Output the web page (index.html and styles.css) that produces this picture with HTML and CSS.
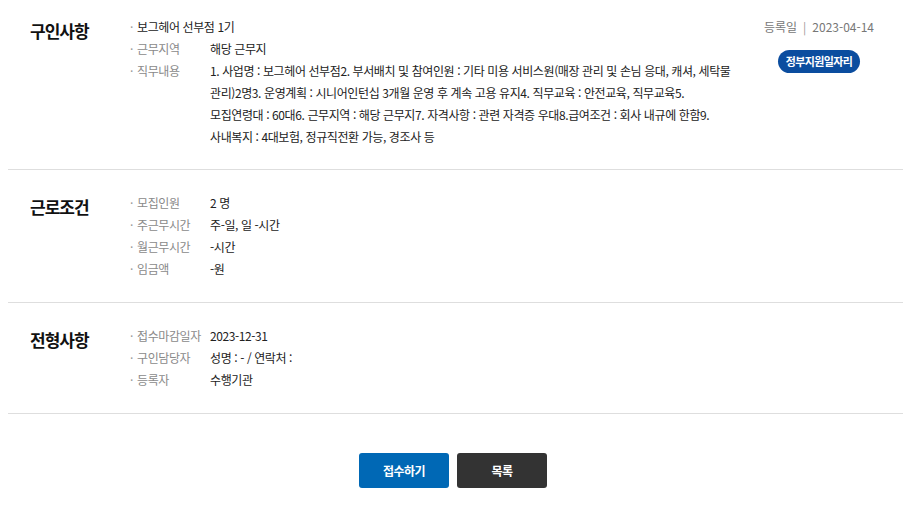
FILE: index.html
```html
<!DOCTYPE html>
<html lang="ko">
<head>
<meta charset="utf-8">
<link rel="stylesheet" href="styles.css">
</head>
<body>
<div class="page">
  <section class="sec sec-first">
    <h2 class="sec-title">구인사항</h2>
    <div class="sec-body">
      <ul class="rows">
        <li class="row"><span class="lead">보그헤어 선부점 1기</span></li>
        <li class="row"><span class="label">근무지역</span><span class="value">해당 근무지</span></li>
        <li class="row"><span class="label">직무내용</span><span class="value">1. 사업명 : 보그헤어 선부점2. 부서배치 및 참여인원 : 기타 미용 서비스원(매장 관리 및 손님 응대, 캐셔, 세탁물<br>관리)2명3. 운영계획 : 시니어인턴십 3개월 운영 후 계속 고용 유지4. 직무교육 : 안전교육, 직무교육5.<br>모집연령대 : 60대6. 근무지역 : 해당 근무지7. 자격사항 : 관련 자격증 우대8.급여조건 : 회사 내규에 한함9.<br>사내복지 : 4대보험, 정규직전환 가능, 경조사 등</span></li>
      </ul>
    </div>
    <div class="meta">
      <p class="reg"><span>등록일</span><span class="bar">|</span><span>2023-04-14</span></p>
      <span class="badge">정부지원일자리</span>
    </div>
  </section>
  <section class="sec">
    <h2 class="sec-title">근로조건</h2>
    <div class="sec-body">
      <ul class="rows">
        <li class="row"><span class="label">모집인원</span><span class="value">2 명</span></li>
        <li class="row"><span class="label">주근무시간</span><span class="value">주-일, 일 -시간</span></li>
        <li class="row"><span class="label">월근무시간</span><span class="value">-시간</span></li>
        <li class="row"><span class="label">임금액</span><span class="value">-원</span></li>
      </ul>
    </div>
  </section>
  <section class="sec">
    <h2 class="sec-title">전형사항</h2>
    <div class="sec-body">
      <ul class="rows">
        <li class="row"><span class="label">접수마감일자</span><span class="value">2023-12-31</span></li>
        <li class="row"><span class="label">구인담당자</span><span class="value">성명 : - / 연락처 :</span></li>
        <li class="row"><span class="label">등록자</span><span class="value">수행기관</span></li>
      </ul>
    </div>
  </section>
  <div class="actions">
    <a class="btn btn-primary">접수하기</a>
    <a class="btn btn-dark">목록</a>
  </div>
</div>
</body>
</html>
```

FILE: styles.css
```css
* { box-sizing: border-box; }
html, body { margin: 0; padding: 0; background: #fff; }
body {
  font-family: "Noto Sans CJK KR", "Noto Sans", sans-serif;
  color: #222;
  width: 903px;
  overflow: hidden;
}
.page { padding-left: 8px; }
.sec {
  display: flex;
  align-items: flex-start;
  border-bottom: 1px solid #dedede;
  padding: 22px 0 22px 22px;
}
.sec-first { padding-top: 16px; padding-bottom: 21px; }
.sec-title {
  margin: 0;
  width: 100px;
  flex: none;
  font-size: 17px;
  line-height: 30px;
  font-weight: 700;
  letter-spacing: -1px;
  color: #111;
}
.sec-body { flex: 1; }
.rows { list-style: none; margin: 0; padding: 0; }
.row {
  display: flex;
  font-size: 12px;
  line-height: 22px;
  letter-spacing: -0.4px;
}
.row::before {
  content: "·";
  color: #999;
  width: 7px;
  flex: none;
}
.label { width: 73px; flex: none; color: #8a8a8a; }
.value { color: #222; white-space: nowrap; }
.lead { color: #222; }
.meta {
  flex: none;
  display: flex;
  flex-direction: column;
  align-items: center;
  margin-right: 28px;
  width: 112px;
}
.reg {
  margin: 0;
  font-size: 12px;
  line-height: 22px;
  color: #777;
  white-space: nowrap;
}
.reg .bar { margin: 0 6px; color: #999; }
.badge {
  margin-top: 12px;
  display: inline-block;
  height: 23px;
  line-height: 23px;
  padding: 0 8px;
  border-radius: 12px;
  background: #0b4d9f;
  color: #fff;
  font-size: 11px;
  font-weight: 700;
  letter-spacing: -0.6px;
}
.actions {
  display: flex;
  justify-content: center;
  gap: 8px;
  padding-top: 39px;
  padding-right: 5px;
}
.btn {
  display: flex;
  align-items: center;
  justify-content: center;
  width: 90px;
  height: 35px;
  border-radius: 3px;
  color: #fff;
  font-size: 12px;
  font-weight: 700;
  letter-spacing: -0.5px;
}
.btn-primary { background: #0068b5; }
.btn-dark { background: #333; }
```
